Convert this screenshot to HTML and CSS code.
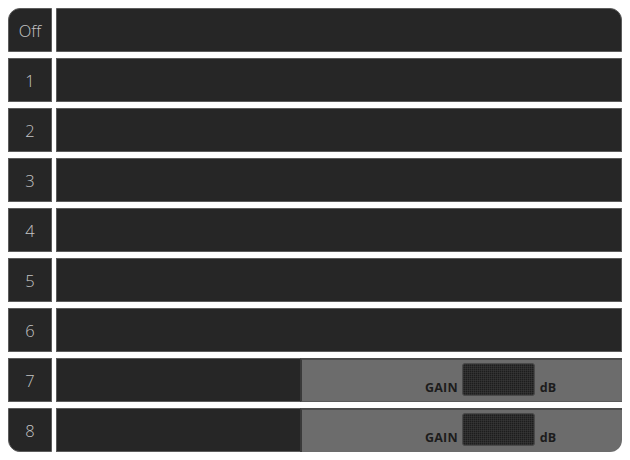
FILE: index.html
```html
<!DOCTYPE html>
<html>
<head>
<meta charset="utf-8">
<link rel="stylesheet" href="styles.css">
</head>
<body>
<div class="board">
  <div class="row first"><div class="label">Off</div><div class="main"></div></div>
  <div class="row"><div class="label">1</div><div class="main"></div></div>
  <div class="row"><div class="label">2</div><div class="main"></div></div>
  <div class="row"><div class="label">3</div><div class="main"></div></div>
  <div class="row"><div class="label">4</div><div class="main"></div></div>
  <div class="row"><div class="label">5</div><div class="main"></div></div>
  <div class="row"><div class="label">6</div><div class="main"></div></div>
  <div class="row"><div class="label">7</div><div class="main split"><div class="fill"></div><div class="panel"><span class="gain">GAIN</span><div class="display"></div><span class="unit">dB</span></div></div></div>
  <div class="row last"><div class="label">8</div><div class="main split"><div class="fill"></div><div class="panel"><span class="gain">GAIN</span><div class="display"></div><span class="unit">dB</span></div></div></div>
</div>
</body>
</html>
```
FILE: styles.css
```css
html, body { margin: 0; padding: 0; background: #ffffff; }
body { width: 630px; height: 460px; overflow: hidden; }
.board {
  padding: 8px 8px 0 8px;
  display: flex;
  flex-direction: column;
  gap: 6px;
}
.row {
  display: flex;
  gap: 4px;
  height: 44px;
}
.label {
  width: 44px;
  box-sizing: border-box;
  background: #262626;
  border: 1px solid #5c5c5c;
  color: #c4c4c4;
  font-family: "Open Sans", "DejaVu Sans", sans-serif;
  font-weight: 300;
  font-size: 16.5px;
  padding-top: 1px;
  display: flex;
  align-items: center;
  justify-content: center;
}
.main {
  flex: 1;
  box-sizing: border-box;
  background: #262626;
  border: 1px solid #5c5c5c;
}
.first .label { border-top-left-radius: 12px; }
.first .main { border-top-right-radius: 12px; }
.last .label { border-bottom-left-radius: 12px; }
.main.split {
  display: flex;
  border: none;
  background: transparent;
}
.fill {
  width: 244px;
  background: #262626;
  border: 1px solid #5c5c5c;
  border-right: none;
  box-sizing: border-box;
}
.panel {
  flex: 1;
  box-sizing: border-box;
  background: #6c6c6c;
  border-top: 2px solid #4c4c4c;
  border-left: 2px solid #3a3a3a;
  border-bottom: 1px solid #5a5a5a;
  display: flex;
  align-items: flex-start;
  padding-top: 3px;
  padding-left: 123px;
  font-family: "Open Sans", "DejaVu Sans", sans-serif;
  font-weight: 700;
  font-size: 12.5px;
  color: #1c1c1c;
}
.last .panel { border-bottom-right-radius: 12px; border-bottom: none; }
.gain { margin-top: 16px; margin-right: 4px; letter-spacing: 0.2px; }
.unit { margin-top: 16px; margin-left: 5px; }
.display {
  width: 73px;
  height: 33px;
  box-sizing: border-box;
  border-radius: 3px;
  border: 1px solid #4a4a4a;
  background-color: #1d1d1d;
  background-image:
    repeating-linear-gradient(0deg, rgba(60,60,60,0.5) 0 1px, transparent 1px 2px),
    repeating-linear-gradient(90deg, rgba(60,60,60,0.5) 0 1px, transparent 1px 2px);
}
```
